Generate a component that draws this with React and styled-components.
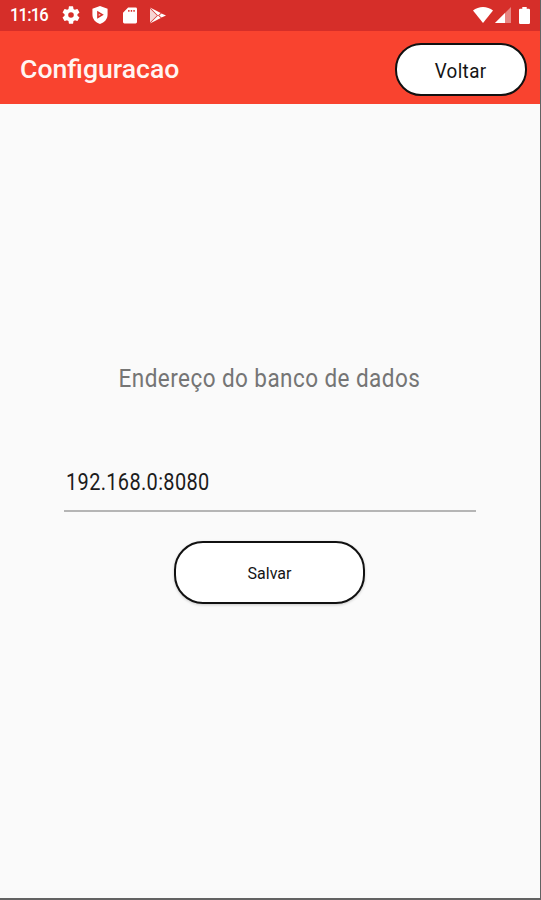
import React from "react";
import styled, { createGlobalStyle } from "styled-components";

const GlobalStyle = createGlobalStyle`
  *, *::before, *::after { box-sizing: border-box; }
  body { margin: 0; background: #fafafa; font-family: Roboto, "Liberation Sans", sans-serif; }
`;

const Screen = styled.div`
  width: 541px;
  height: 900px;
  display: flex;
  flex-direction: column;
  background: #fafafa;
  border-right: 1px solid #626262;
  border-bottom: 2px solid #626262;
  overflow: hidden;
`;

const StatusBar = styled.div`
  height: 31px;
  flex: none;
  display: flex;
  align-items: center;
  justify-content: space-between;
  padding: 0 10px 1px 10px;
  background: #d62e29;
  color: #fff;
`;

const StatusGroup = styled.div`
  display: flex;
  align-items: center;
`;

const Clock = styled.span`
  width: 52px;
  font-size: 18px;
  font-weight: 500;
  line-height: 30px;
`;

const Icon = styled.svg`
  display: block;
  flex: none;
  width: ${(p) => p.$w}px;
  height: ${(p) => p.$h}px;
  margin-left: ${(p) => p.$gap || 0}px;
  fill: #fff;
`;

const Toolbar = styled.header`
  height: 73px;
  flex: none;
  display: flex;
  align-items: center;
  justify-content: space-between;
  padding: 4px 13px 0 20px;
  background: #f9432f;
`;

const Fitted = styled.span`
  display: inline-block;
  white-space: nowrap;
  letter-spacing: ${(p) => p.$spacing || 0}px;
  transform: scaleX(${(p) => p.$scale || 1});
  transform-origin: ${(p) => p.$origin || "center"};
`;

const Title = styled.h1`
  margin: 0;
  padding-bottom: 1px;
  font-size: 26.5px;
  font-weight: 500;
  line-height: 32px;
  color: #fff5f2;
`;

const PillButton = styled.button`
  display: flex;
  align-items: center;
  justify-content: center;
  flex: none;
  width: ${(p) => p.$w}px;
  height: ${(p) => p.$h}px;
  padding: ${(p) => p.$drop || 0}px 0 0;
  border: 2px solid #111;
  border-radius: ${(p) => p.$radius}px;
  background: #fff;
  color: #141414;
  font-family: inherit;
  font-size: ${(p) => p.$size}px;
  box-shadow: ${(p) => (p.$raised ? "0 1px 3px rgba(0,0,0,.2)" : "none")};
`;

const Form = styled.main`
  flex: 1;
  display: flex;
  flex-direction: column;
  align-items: center;
  padding: 258px 1px 0 0;
`;

const Label = styled.label`
  font-size: 26.5px;
  line-height: 32px;
  color: #757575;
`;

const Field = styled.div`
  width: 412px;
  height: 48px;
  margin: 70px 0 29px;
  padding: 2px 2px 0;
  border-bottom: 2px solid #b5b5b5;
  font-size: 23.5px;
  line-height: 32px;
  color: #1c1c1c;
`;

export default function App() {
  return (
    <>
      <GlobalStyle />
      <Screen>
        <StatusBar>
          <StatusGroup>
            <Clock><Fitted $scale={0.92} $spacing={-0.9} $origin="left">11:16</Fitted></Clock>
            <Icon $w={18} $h={18} viewBox="2 2 20 20">
              <path d="M19.14 12.94c.04-.3.06-.61.06-.94 0-.32-.02-.64-.07-.94l2.03-1.58a.49.49 0 0 0 .12-.61l-1.92-3.32a.49.49 0 0 0-.59-.22l-2.39.96c-.5-.38-1.03-.7-1.62-.94l-.36-2.54a.48.48 0 0 0-.48-.41h-3.84c-.24 0-.43.17-.47.41l-.36 2.54c-.59.24-1.13.57-1.62.94l-2.39-.96a.49.49 0 0 0-.59.22L2.74 8.87c-.12.21-.08.47.12.61l2.03 1.58c-.05.3-.09.63-.09.94s.02.64.07.94l-2.03 1.58a.49.49 0 0 0-.12.61l1.92 3.32c.12.22.37.29.59.22l2.39-.96c.5.38 1.03.7 1.62.94l.36 2.54c.05.24.24.41.48.41h3.84c.24 0 .44-.17.47-.41l.36-2.54c.59-.24 1.13-.56 1.62-.94l2.39.96c.22.08.47 0 .59-.22l1.92-3.32a.49.49 0 0 0-.12-.61zM12 15.1A3.1 3.1 0 1 1 12 8.9a3.1 3.1 0 0 1 0 6.2z" />
            </Icon>
            <Icon $w={16} $h={18} $gap={12} viewBox="0 0 16 19">
              <path fillRule="evenodd" d="M8 0l8 3v6c0 4.700-3.200 8.600-8 10-4.800-1.400-8-5.300-8-10V3zM5 5v8.400l7-4.200z" />
              <path d="M6.600 7.800v2.800l2.400-1.400z" opacity=".7" />
            </Icon>
            <Icon $w={14} $h={17} $gap={15} viewBox="0 0 15 17">
              <path fillRule="evenodd" d="M5.500 0H13.500Q15 0 15 1.500V15.500Q15 17 13.500 17H1.500Q0 17 0 15.500V5.500zM5.500 2.500v2h1.500v-2zM8.300 2.500v2h1.500v-2zM11.100 2.500v2h1.500v-2z" />
            </Icon>
            <Icon $w={16} $h={17} $gap={13} viewBox="0 0 16 17">
              <path d="M0 .5L10.800 6 8 8.500z" />
              <path d="M0 1.500L7 8.500 0 15.500z" opacity=".8" />
              <path d="M0 16.500L10.800 11 8 8.500z" />
              <path d="M11.500 6.400L16 8.500 11.500 10.600 9.200 8.500z" />
            </Icon>
          </StatusGroup>
          <StatusGroup>
            <Icon $w={20} $h={16} viewBox="0 0 20 16">
              <path d="M0 3.600C5.500-1.200 14.500-1.200 20 3.600L10 16z" />
            </Icon>
            <Icon $w={16} $h={16} $gap={2} viewBox="0 0 16 16">
              <path d="M0 16L16 0V16z" opacity=".42" />
              <path d="M0 16L10 6V16z" />
            </Icon>
            <Icon $w={11} $h={17} $gap={8} viewBox="0 0 11 17">
              <path d="M3.300 0H7.700V1.700H9.800Q11 1.700 11 2.900V15.800Q11 17 9.800 17H1.200Q0 17 0 15.800V2.900Q0 1.700 1.200 1.700H3.300z" />
            </Icon>
          </StatusGroup>
        </StatusBar>
        <Toolbar>
          <Title><Fitted $scale={1.005} $origin="left">Configuracao</Fitted></Title>
          <PillButton $w={132} $h={53} $radius={26} $size={20} $drop={3}>
            <Fitted $scale={0.94} $spacing={0.4}>Voltar</Fitted>
          </PillButton>
        </Toolbar>
        <Form>
          <Label><Fitted $scale={0.85} $spacing={0.5}>Endereço do banco de dados</Fitted></Label>
          <Field><Fitted $scale={0.85} $spacing={0.4} $origin="left">192.168.0:8080</Fitted></Field>
          <PillButton $w={191} $h={63} $radius={29} $size={16} $drop={2} $raised>
            <Fitted>Salvar</Fitted>
          </PillButton>
        </Form>
      </Screen>
    </>
  );
}
